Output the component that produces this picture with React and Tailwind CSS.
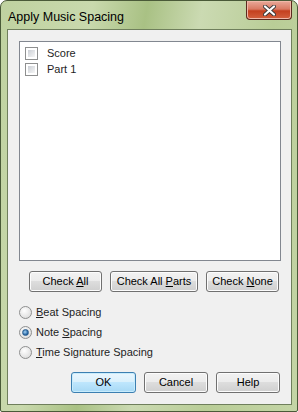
import React from 'react'

const font = { fontFamily: '"Liberation Sans", Arial, sans-serif' }

const Btn = ({ children, w, primary }) => (
  <button
    className={
      primary
        ? `h-[21px] ${w} rounded-[3px] border border-[#3c7fb1] bg-[linear-gradient(#eaf6fd_0%,#d9f0fc_50%,#bee6fd_50%,#a7d9f5_100%)] shadow-[inset_0_0_0_1px_#c8ecfc] text-[11px] text-black`
        : `h-[21px] ${w} rounded-[3px] border border-[#707070] bg-[linear-gradient(#f2f2f2_0%,#ebebeb_50%,#dddddd_50%,#cfcfcf_100%)] shadow-[inset_0_0_0_1px_#fcfcfc] text-[11px] text-black`
    }
  >
    {children}
  </button>
)

const Check = ({ label }) => (
  <div className="flex items-center h-[16px]">
    <span className="w-[13px] h-[13px] border border-[#8e8f8f] bg-white p-[2px]">
      <span className="block w-full h-full bg-[linear-gradient(135deg,#cbcfd5,#f6f6f6)]" />
    </span>
    <span className="ml-[9px] text-[11px] text-[#1e1e1e]">{label}</span>
  </div>
)

const Radio = ({ children, on }) => (
  <div className="flex items-center h-[20px]">
    <span className="w-[13px] h-[13px] rounded-full border border-[#8e8f8f] bg-[radial-gradient(circle_at_40%_35%,#ffffff,#d4d4d4)] flex items-center justify-center">
      {on && (
        <span className="w-[7px] h-[7px] rounded-full bg-[radial-gradient(circle_at_40%_40%,#a4d3f5,#1c5c9c_70%)] border border-[#2d5f8f]" />
      )}
    </span>
    <span className="ml-[4px] text-[11px] text-[#1e1e1e]">{children}</span>
  </div>
)

export default function App() {
  return (
    <div className="w-[298px] h-[412px] bg-white" style={font}>
      <div className="w-[298px] h-[412px] rounded-t-[7px] rounded-b-[2px] border border-[#4a5a38] bg-[linear-gradient(100deg,#bfd2a0_0%,#c9d9ad_25%,#a9c184_40%,#cbdab2_55%,#b9cd97_75%,#c4d5a6_100%)] flex flex-col">
        <div className="h-[28px] flex items-start">
          <div className="pl-[7px] pt-[7px] text-[12.5px] text-black">Apply Music Spacing</div>
          <div className="ml-auto mr-[5px] w-[46px] h-[19px] rounded-b-[4px] border border-t-0 border-[#5b2a1f] bg-[linear-gradient(#e9a99a_0%,#d97a63_45%,#c4401f_55%,#d3613f_100%)] flex items-center justify-center shadow-[inset_0_0_0_1px_#f0b8a8]">
            <svg width="13" height="11" viewBox="0 0 13 11">
              <path d="M2 1.5 L11 9.5 M11 1.5 L2 9.5" stroke="#3a3a3a" strokeWidth="4" strokeLinecap="round" />
              <path d="M2 1.5 L11 9.5 M11 1.5 L2 9.5" stroke="#ffffff" strokeWidth="2.2" strokeLinecap="round" />
            </svg>
          </div>
        </div>
        <div className="mx-[6px] mr-[5px] h-[376px] border border-[#6f7f5c] bg-[#f0f0f0] flex flex-col">
          <div className="ml-[11px] mt-[11px] w-[262px] h-[220px] border border-[#828790] bg-white pl-[5px] pt-[3px]">
            <Check label="Score" />
            <Check label="Part 1" />
          </div>
          <div className="mt-[10px] ml-[21px] flex gap-[8px]">
            <Btn w="w-[73px]">Check <u>A</u>ll</Btn>
            <Btn w="w-[88px]">Check All <u>P</u>arts</Btn>
            <Btn w="w-[73px]">Check <u>N</u>one</Btn>
          </div>
          <div className="mt-[10px] ml-[11px] flex flex-col">
            <Radio><u>B</u>eat Spacing</Radio>
            <Radio on>Note <u>S</u>pacing</Radio>
            <Radio><u>T</u>ime Signature Spacing</Radio>
          </div>
          <div className="mt-[10px] ml-[63px] flex gap-[8px]">
            <Btn w="w-[65px]" primary>OK</Btn>
            <Btn w="w-[64px]">Cancel</Btn>
            <Btn w="w-[64px]">Help</Btn>
          </div>
        </div>
      </div>
    </div>
  )
}
